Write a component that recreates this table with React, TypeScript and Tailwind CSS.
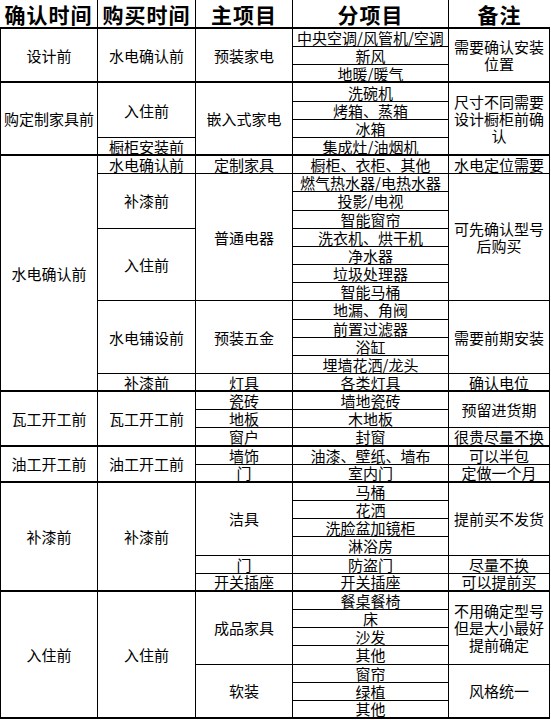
import React from 'react';

interface Cell {
  col: number;
  row: number;
  span?: number;
  text: string;
}

// rows that close a group get a heavier rule under them
const groupEnds = [3, 7, 20, 23, 25, 31, 38];

const headers = ['确认时间', '购买时间', '主项目', '分项目', '备注'];

const subItems = [
  '中央空调/风管机/空调', '新风', '地暖/暖气',
  '洗碗机', '烤箱、蒸箱', '冰箱', '集成灶/油烟机',
  '橱柜、衣柜、其他',
  '燃气热水器/电热水器', '投影/电视', '智能窗帘', '洗衣机、烘干机', '净水器', '垃圾处理器', '智能马桶',
  '地漏、角阀', '前置过滤器', '浴缸', '埋墙花洒/龙头',
  '各类灯具',
  '墙地瓷砖', '木地板', '封窗',
  '油漆、壁纸、墙布', '室内门',
  '马桶', '花洒', '洗脸盆加镜柜', '淋浴房', '防盗门', '开关插座',
  '餐桌餐椅', '床', '沙发', '其他',
  '窗帘', '绿植', '其他',
];

const cells: Cell[] = [
  // 确认时间
  { col: 1, row: 1, span: 3, text: '设计前' },
  { col: 1, row: 4, span: 4, text: '购定制家具前' },
  { col: 1, row: 8, span: 13, text: '水电确认前' },
  { col: 1, row: 21, span: 3, text: '瓦工开工前' },
  { col: 1, row: 24, span: 2, text: '油工开工前' },
  { col: 1, row: 26, span: 6, text: '补漆前' },
  { col: 1, row: 32, span: 7, text: '入住前' },
  // 购买时间
  { col: 2, row: 1, span: 3, text: '水电确认前' },
  { col: 2, row: 4, span: 3, text: '入住前' },
  { col: 2, row: 7, text: '橱柜安装前' },
  { col: 2, row: 8, text: '水电确认前' },
  { col: 2, row: 9, span: 3, text: '补漆前' },
  { col: 2, row: 12, span: 4, text: '入住前' },
  { col: 2, row: 16, span: 4, text: '水电铺设前' },
  { col: 2, row: 20, text: '补漆前' },
  { col: 2, row: 21, span: 3, text: '瓦工开工前' },
  { col: 2, row: 24, span: 2, text: '油工开工前' },
  { col: 2, row: 26, span: 6, text: '补漆前' },
  { col: 2, row: 32, span: 7, text: '入住前' },
  // 主项目
  { col: 3, row: 1, span: 3, text: '预装家电' },
  { col: 3, row: 4, span: 4, text: '嵌入式家电' },
  { col: 3, row: 8, text: '定制家具' },
  { col: 3, row: 9, span: 7, text: '普通电器' },
  { col: 3, row: 16, span: 4, text: '预装五金' },
  { col: 3, row: 20, text: '灯具' },
  { col: 3, row: 21, text: '瓷砖' },
  { col: 3, row: 22, text: '地板' },
  { col: 3, row: 23, text: '窗户' },
  { col: 3, row: 24, text: '墙饰' },
  { col: 3, row: 25, text: '门' },
  { col: 3, row: 26, span: 4, text: '洁具' },
  { col: 3, row: 30, text: '门' },
  { col: 3, row: 31, text: '开关插座' },
  { col: 3, row: 32, span: 4, text: '成品家具' },
  { col: 3, row: 36, span: 3, text: '软装' },
  // 分项目
  ...subItems.map((text, i) => ({ col: 4, row: i + 1, text })),
  // 备注
  { col: 5, row: 1, span: 3, text: '需要确认安装位置' },
  { col: 5, row: 4, span: 4, text: '尺寸不同需要设计橱柜前确认' },
  { col: 5, row: 8, text: '水电定位需要' },
  { col: 5, row: 9, span: 7, text: '可先确认型号后购买' },
  { col: 5, row: 16, span: 4, text: '需要前期安装' },
  { col: 5, row: 20, text: '确认电位' },
  { col: 5, row: 21, span: 2, text: '预留进货期' },
  { col: 5, row: 23, text: '很贵尽量不换' },
  { col: 5, row: 24, text: '可以半包' },
  { col: 5, row: 25, text: '定做一个月' },
  { col: 5, row: 26, span: 4, text: '提前买不发货' },
  { col: 5, row: 30, text: '尽量不换' },
  { col: 5, row: 31, text: '可以提前买' },
  { col: 5, row: 32, span: 4, text: '不用确定型号但是大小最好提前确定' },
  { col: 5, row: 36, span: 3, text: '风格统一' },
];

export default function App() {
  return (
    <div className="bg-white w-[551px] h-[720px] overflow-hidden font-['Noto_Sans_CJK_SC','Liberation_Sans',sans-serif] text-black">
      <div className="grid grid-cols-[98px_98px_97px_156px_101px] grid-rows-[29px_repeat(38,minmax(0,1fr))] h-[719px] w-[550px]">
        {headers.map((h, i) => (
          <div
            key={h}
            style={{ gridColumn: i + 1, gridRow: 1 }}
            className={`flex items-center justify-center border-b-2 border-black text-[21px] font-bold leading-[24px] tracking-[1px] ${i < 4 ? 'border-r' : ''}`}
          >
            {h}
          </div>
        ))}
        {cells.map((c) => {
          const span = c.span ?? 1;
          const last = c.row + span - 1;
          const heavy = groupEnds.includes(last);
          return (
            <div
              key={`${c.col}-${c.row}`}
              style={{ gridColumn: c.col, gridRow: `${c.row + 1} / span ${span}` }}
              className={`flex items-center justify-center text-center border-r border-black px-1 text-[15px] leading-[17px] ${
                heavy ? 'border-b-2' : 'border-b'
              } ${c.col === 1 ? 'border-l' : ''} ${c.col === 5 ? 'break-all' : 'whitespace-nowrap'}`}
            >
              {c.text}
            </div>
          );
        })}
      </div>
    </div>
  );
}
